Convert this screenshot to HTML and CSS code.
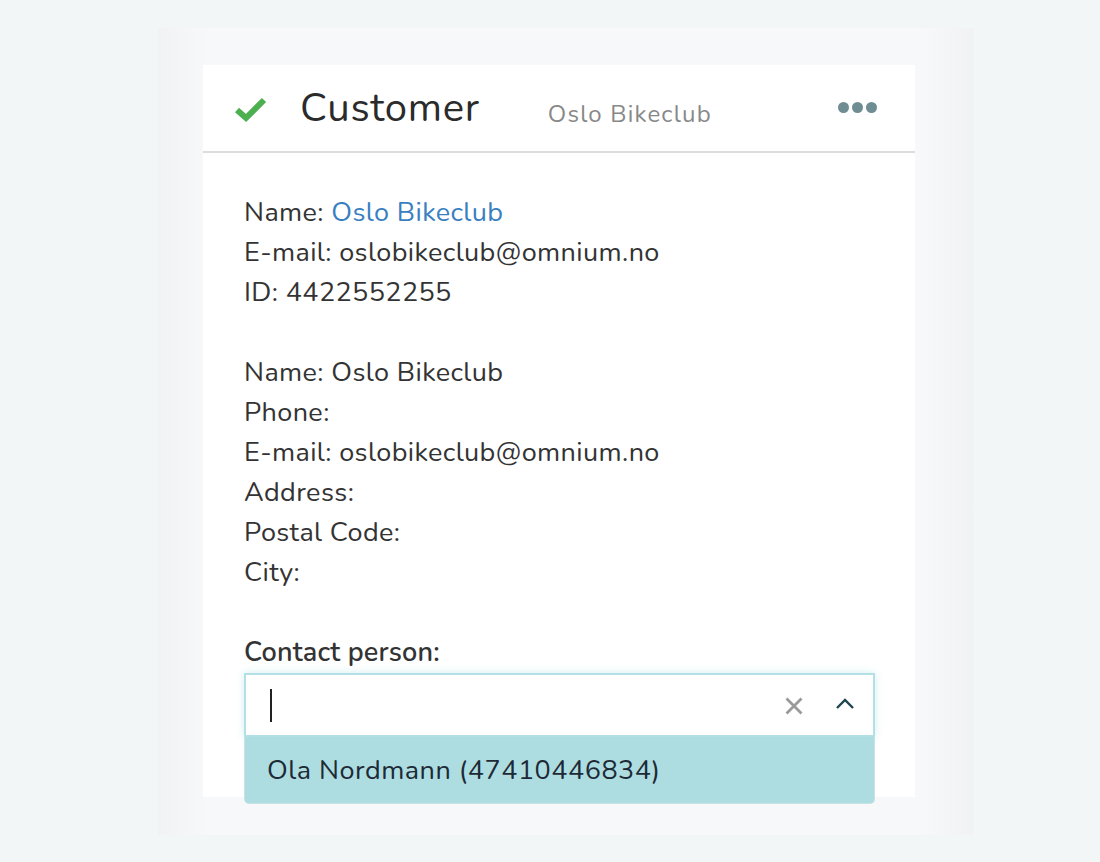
FILE: index.html
```html
<!DOCTYPE html>
<html>
<head>
<meta charset="utf-8">
<link rel="stylesheet" href="styles.css">
</head>
<body>
<div class="outer">
  <div class="card">
    <div class="header">
      <svg class="check" width="34" height="28" viewBox="0 0 34 28"><path d="M3 15 L12 23 L30 5" fill="none" stroke="#4caf50" stroke-width="6"/></svg>
      <div class="title">Customer</div>
      <div class="subtitle">Oslo Bikeclub</div>
      <div class="dots"><span></span><span></span><span></span></div>
    </div>
    <div class="body">
      <div class="line">Name: <span class="link">Oslo Bikeclub</span></div>
      <div class="line">E-mail: oslobikeclub@omnium.no</div>
      <div class="line">ID: 4422552255</div>
      <div class="line"></div>
      <div class="line">Name: Oslo Bikeclub</div>
      <div class="line">Phone:</div>
      <div class="line">E-mail: oslobikeclub@omnium.no</div>
      <div class="line">Address:</div>
      <div class="line">Postal Code:</div>
      <div class="line">City:</div>
      <div class="line"></div>
      <div class="line label">Contact person:</div>
      <div class="select">
        <div class="input">
          <span class="caret"></span>
          <svg class="clear" width="20" height="20" viewBox="0 0 20 20"><path d="M2.5 2.5 L17.5 17.5 M17.5 2.5 L2.5 17.5" stroke="#999" stroke-width="2.8"/></svg>
          <svg class="chev" width="20" height="12" viewBox="0 0 20 12"><path d="M2 10 L10 2 L18 10" fill="none" stroke="#1d4650" stroke-width="2.4"/></svg>
        </div>
        <div class="option">Ola Nordmann (47410446834)</div>
      </div>
    </div>
  </div>
</div>
</body>
</html>
```
FILE: styles.css
```css
html, body { margin: 0; padding: 0; }
body {
  background: #f3f6f7;
  width: 1100px;
  height: 862px;
  overflow: hidden;
  font-family: "Nunito", "Lato", "Noto Sans", sans-serif;
  color: #333;
}
.outer {
  margin: 28px 0 0 158px;
  width: 815px;
  height: 807px;
  box-sizing: border-box;
  padding: 37px 58px 0 45px;
  background: linear-gradient(90deg, #f1f2f4 0%, #f7f8fa 6%, #f7f8fa 94%, #f1f2f4 100%);
}
.card {
  width: 712px;
  height: 732px;
  background: #fff;
}
.header {
  height: 86px;
  border-bottom: 2px solid #dcdcdc;
  display: flex;
  align-items: center;
}
.check { margin-left: 31px; margin-top: 2px; }
.title {
  font-size: 40px;
  margin-left: 32px;
  color: #2b2b2b;
  letter-spacing: 0.75px;
}
.subtitle {
  font-size: 24px;
  color: #888;
  margin-left: 68px;
  margin-top: 12px;
  letter-spacing: 1.2px;
}
.dots {
  margin-left: auto;
  margin-right: 38px;
  display: flex;
  gap: 3px;
  margin-top: -2px;
}
.dots span {
  width: 11px; height: 11px; border-radius: 50%;
  background: #6f8d93;
}
.body {
  padding: 40px 41px 0 41px;
}
.line {
  height: 40px;
  line-height: 40px;
  font-size: 27px;
  letter-spacing: 0.4px;
  color: #333;
}
.link { color: #3a7fc1; }
.label { color: #333; font-weight: 600; letter-spacing: 0.2px; }
.select {
  width: 631px;
  position: relative;
}
.input {
  height: 60px;
  border: 2px solid #b2e0e4;
  box-shadow: 0 0 8px rgba(160, 215, 220, 0.45);
  display: flex;
  align-items: center;
  background: #fff;
}
.caret {
  width: 2px; height: 33px; background: #222;
  margin-left: 24px;
}
.clear { margin-left: auto; margin-right: 31px; margin-top: 2px; }
.chev { margin-right: 18px; margin-top: -2px; }
.option {
  height: 67px;
  line-height: 67px;
  background: #aedde1;
  border: 1px solid #c6e4e8;
  border-top: none;
  border-radius: 0 0 5px 5px;
  padding-left: 22px;
  font-size: 27px;
  letter-spacing: 0.5px;
  color: #1d2a36;
  box-sizing: border-box;
}
```
